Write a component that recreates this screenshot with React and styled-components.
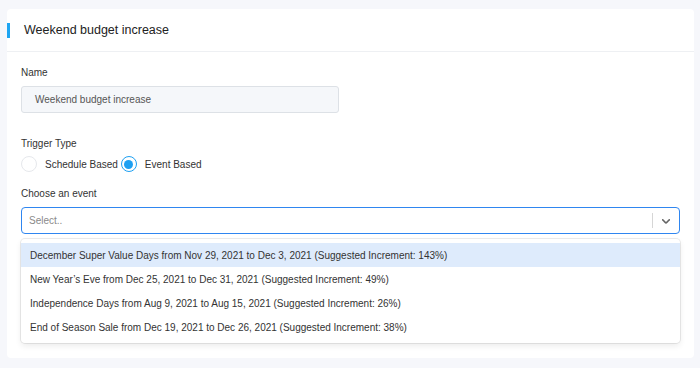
import React from "react";
import styled, { createGlobalStyle } from "styled-components";

const Global = createGlobalStyle`
  html, body { margin: 0; padding: 0; background: #f6f7fb; }
  body { font-family: "Liberation Sans", Arial, sans-serif; color: #333; }
  * { box-sizing: border-box; }
`;

const Page = styled.div`
  padding: 9px 6px 11px 7px;
`;

const Card = styled.div`
  background: #fff;
  border-radius: 4px;
  min-height: 348px;
`;

const Header = styled.div`
  display: flex;
  align-items: center;
  gap: 14px;
  height: 43px;
  border-bottom: 1px solid #eef0f3;
`;

const Marker = styled.span`
  width: 3px;
  height: 15px;
  background: #1ea5f2;
`;

const Title = styled.h1`
  margin: 0;
  font-size: 12.5px;
  font-weight: 400;
  color: #222;
`;

const Body = styled.div`
  padding: 14px 14px 15px 14px;
  display: flex;
  flex-direction: column;
`;

const Label = styled.div`
  font-size: 10px;
  line-height: 14px;
  color: #333;
  margin-top: ${(p) => p.$mt || 0}px;
`;

const TextInput = styled.div`
  width: 318px;
  height: 27px;
  margin-top: 6px;
  background: #f5f7fa;
  border: 1px solid #dde1e6;
  border-radius: 3px;
  padding-left: 13px;
  display: flex;
  align-items: center;
  font-size: 10px;
  color: #555;
`;

const RadioRow = styled.div`
  display: flex;
  align-items: center;
  margin-top: 5px;
  height: 16px;
`;

const RadioCircle = styled.span`
  width: 16px;
  height: 16px;
  border-radius: 50%;
  border: ${(p) => (p.$checked ? "1.5px solid #1ea0f2" : "1px solid #e6e8ec")};
  display: flex;
  align-items: center;
  justify-content: center;
  margin-right: 8px;
  &::after {
    content: "";
    display: ${(p) => (p.$checked ? "block" : "none")};
    width: 9px;
    height: 9px;
    border-radius: 50%;
    background: #1ea0f2;
  }
`;

const RadioLabel = styled.span`
  font-size: 10px;
  color: #333;
  margin-right: 3px;
`;

const Select = styled.div`
  margin-top: 6px;
  height: 27px;
  border: 1.5px solid #2f86f0;
  border-radius: 4px;
  display: flex;
  align-items: center;
  padding-left: 7px;
`;

const Placeholder = styled.span`
  flex: 1;
  font-size: 10px;
  color: #8a8a8a;
`;

const Separator = styled.span`
  width: 1px;
  height: 15px;
  background: #d6d6d6;
`;

const Indicator = styled.span`
  width: 26px;
  display: flex;
  align-items: center;
  justify-content: center;
  color: #666;
`;

const Menu = styled.div`
  margin-top: 5px;
  border-radius: 4px;
  box-shadow: 0 0 0 1px rgba(0, 0, 0, 0.08), 0 3px 6px rgba(0, 0, 0, 0.08);
  padding: 4px 0;
`;

const Option = styled.div`
  height: 24px;
  display: flex;
  align-items: center;
  padding-left: 9px;
  font-size: 10px;
  color: #333;
  background: ${(p) => (p.$active ? "#deebfc" : "transparent")};
`;

const options = [
  "December Super Value Days from Nov 29, 2021 to Dec 3, 2021 (Suggested Increment: 143%)",
  "New Year\u2019s Eve from Dec 25, 2021 to Dec 31, 2021 (Suggested Increment: 49%)",
  "Independence Days from Aug 9, 2021 to Aug 15, 2021 (Suggested Increment: 26%)",
  "End of Season Sale from Dec 19, 2021 to Dec 26, 2021 (Suggested Increment: 38%)",
];

export default function App() {
  return (
    <>
      <Global />
      <Page>
        <Card>
          <Header>
            <Marker />
            <Title>Weekend budget increase</Title>
          </Header>
          <Body>
            <Label>Name</Label>
            <TextInput>Weekend budget increase</TextInput>
            <Label $mt={24}>Trigger Type</Label>
            <RadioRow>
              <RadioCircle />
              <RadioLabel>Schedule Based</RadioLabel>
              <RadioCircle $checked />
              <RadioLabel>Event Based</RadioLabel>
            </RadioRow>
            <Label $mt={15}>Choose an event</Label>
            <Select>
              <Placeholder>Select..</Placeholder>
              <Separator />
              <Indicator>
                <svg width="14" height="14" viewBox="0 0 20 20" fill="currentColor">
                  <path d="M4.516 7.548c0.436-0.446 1.043-0.481 1.576 0l3.908 3.747 3.908-3.747c0.533-0.481 1.141-0.446 1.574 0 0.436 0.445 0.408 1.197 0 1.615-0.406 0.418-4.695 4.502-4.695 4.502-0.217 0.223-0.502 0.335-0.787 0.335s-0.57-0.112-0.789-0.335c0 0-4.287-4.084-4.695-4.502s-0.436-1.17 0-1.615z" />
                </svg>
              </Indicator>
            </Select>
            <Menu>
              {options.map((o, i) => (
                <Option key={i} $active={i === 0}>
                  {o}
                </Option>
              ))}
            </Menu>
          </Body>
        </Card>
      </Page>
    </>
  );
}
